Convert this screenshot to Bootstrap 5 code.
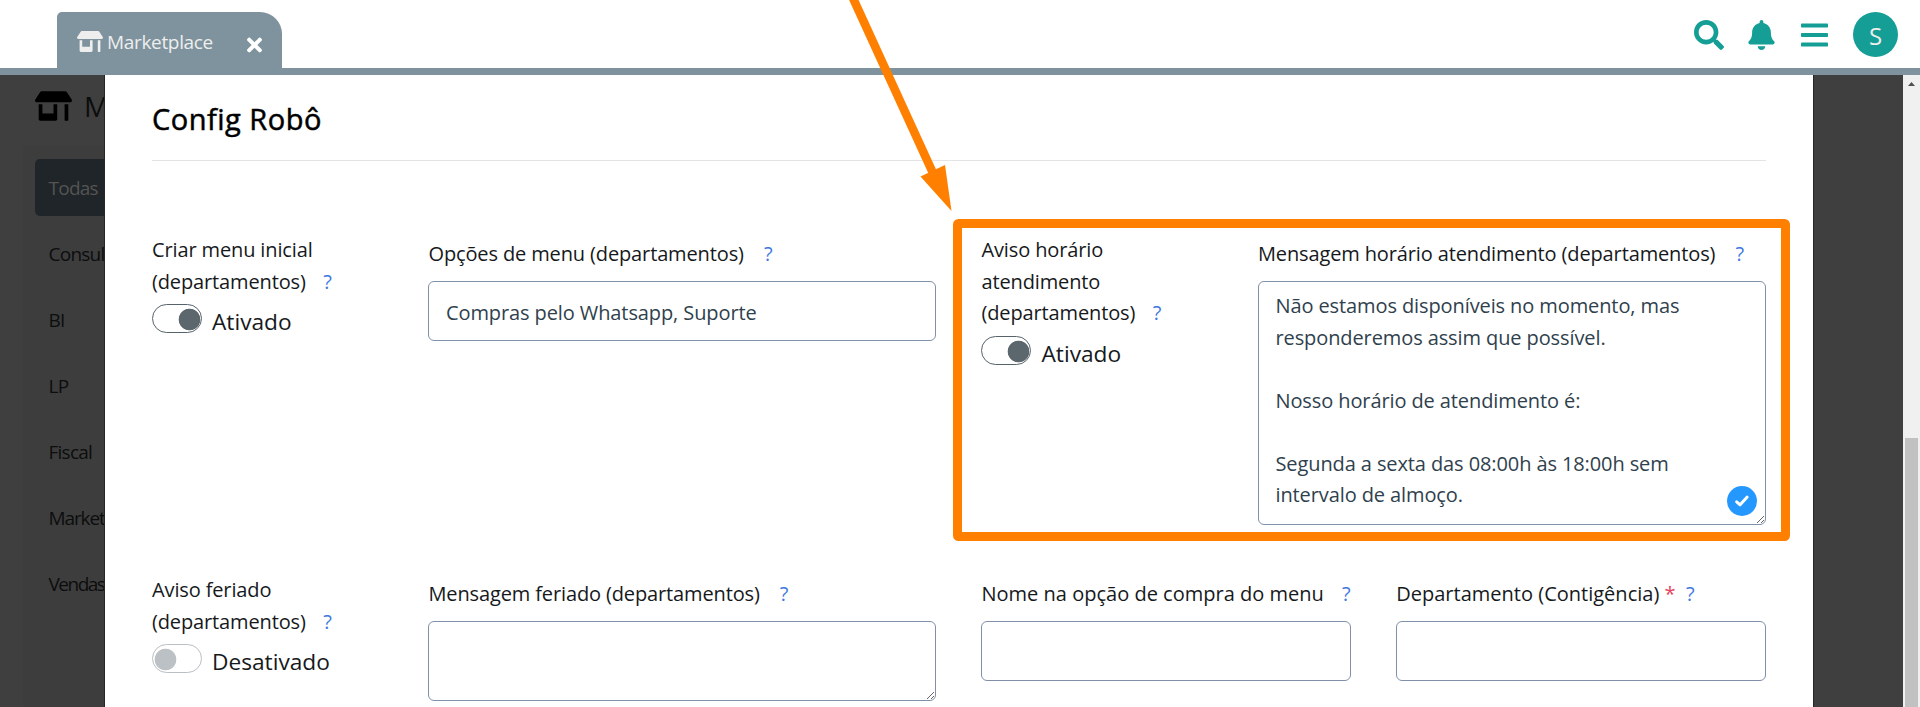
<!DOCTYPE html>
<html lang="pt-BR">
<head>
<meta charset="utf-8">
<meta name="viewport" content="width=device-width, initial-scale=1">
<title>Marketplace</title>
<link href="https://cdn.jsdelivr.net/npm/bootstrap@5.3.0/dist/css/bootstrap.min.css" rel="stylesheet">
<style>
  body { font-family: "Open Sans", "Noto Sans", sans-serif; font-size: 20px; color: #16191c; height: 100vh; }
  .topbar { height: 75px; border-bottom: 7px solid #7e939d; padding: 12px 22px 0 57px; }
  .tab-item { width: 225px; height: 56px; padding: 0 20px; background: #7e939d; color: #eee; border-radius: 5px 22px 0 0; font-size: 19px; letter-spacing: -.33px; }
  .tab-item .tab-icon { margin-top: 19px; }
  .tab-item .tab-label { line-height: 28px; margin: 16px 0 0 4px; }
  .tab-item .tab-close { margin-top: 15.5px; }
  .tools { color: #149e95; }
  .avatar { width: 45px; height: 45px; background: #149e95; color: #eee; font-size: 24px; line-height: 47px; margin-left: 25px; }

  .stage { background: #3f3f3f; }
  .side { width: 105px; flex: none; color: #0c0d0d; white-space: nowrap; }
  .side-title { height: 71px; padding: 16px 0 0 35px; font-size: 28px; line-height: 36px; }
  .side-title span { margin: -3px 0 0 12px; letter-spacing: -8px; }
  .side-menu { background: #3d3d3d; margin-left: 23px; padding: 13px 0 0 12px; font-size: 19px; letter-spacing: -.75px; }
  .side-menu .menu-entry { height: 57px; line-height: 58px; padding-left: 13.5px; margin-bottom: 9px; border-radius: 5px 0 0 5px; }
  .side-menu .menu-entry.long { letter-spacing: -1.1px; }
  .side-menu .menu-entry.longer { letter-spacing: -1.5px; }
  .side-menu .menu-entry.active { background: #1f2528; color: #545454; }

  .dialog-pane { width: 1708px; flex: none; padding: 26px 47px 0; box-shadow: 0 0 0 1px #262626; }
  .dialog-title { font-size: 29px; line-height: 36px; font-weight: 400; letter-spacing: .5px; -webkit-text-stroke: .5px #000; padding-bottom: 23px; margin-bottom: 73px; border-bottom: 1px solid #e2e4e6; color: #000; }
  .fields { --bs-gutter-x: 45px; margin-bottom: 49px; }
  .field-name { line-height: 31.5px; letter-spacing: -.13px; }
  .field-name.lowered { margin: 3.5px 0 12px; white-space: nowrap; }
  .hint { color: #4079e0; margin-left: 15px; }
  .req { color: #e4455b; }
  .col-2 .hint { margin-left: 12.5px; }
  .col-3 .field-name { letter-spacing: .01px; }
  .col-3 .hint { margin-left: 13px; }
  .col-3 .req + .hint { margin-left: 10.5px; }
  .fields .form-control { font-size: 20px; line-height: 31.5px; letter-spacing: -.1px; border: 1px solid #8090a8; border-radius: 6px; padding: 8px 16.5px 7px; color: #2f414d; }
  .fields input.form-control { height: 60px; padding: 9px 16.5px 7px; }
  .fields .tall { height: 244px; white-space: pre; overflow: hidden; }
  .fields .short { height: 80px; overflow: hidden; }
  .toggle-row { margin-top: 7px; height: 34px; font-size: 22.7px; line-height: 35px; }
  .toggle-row .form-check-input { width: 50px; height: 29px; margin: 0 10px 0 0; float: none; flex: none; border: 1px solid #56636b; border-radius: 15px;
    background: #fff radial-gradient(circle at 36.5px 14.5px, #5b666d 10.4px, transparent 11.2px) no-repeat; }
  .toggle-row .form-check-input.off { border-color: #b9bfc3; background-image: radial-gradient(circle at 12.5px 14.5px, #bcc1c5 10.4px, transparent 11.2px); }
  .ok-badge { right: 9px; bottom: 9px; width: 30px; height: 30px; background: #2598ff; }

  .scroll-track { width: 17px; flex: none; background: #f0f0f0; }
  .scroll-gap { height: 346px; }
  .scroll-thumb { width: 13px; background: #c1c1c1; }
  .annotation { inset: 0; pointer-events: none; }
</style>
</head>
<body class="d-flex flex-column overflow-hidden position-relative bg-white">

<header class="topbar bg-white d-flex justify-content-between align-items-start">
  <div class="tab-item d-flex align-items-start">
    <svg class="tab-icon" width="26" height="21" viewBox="0 0 640 512" fill="currentColor"><path d="M320 384H128V224H64v256c0 17.7 14.3 32 32 32h256c17.7 0 32-14.3 32-32V224h-64v160zm314.6-241.8l-85.3-128c-6-8.9-16-14.2-26.7-14.2H117.4c-10.7 0-20.7 5.3-26.6 14.2l-85.3 128c-14.2 21.3 1 49.8 26.6 49.8H608c25.5 0 40.7-28.5 26.6-49.8zM512 496c0 8.8 7.2 16 16 16h32c8.8 0 16-7.2 16-16V224h-64v272z"/></svg>
    <span class="tab-label me-auto">Marketplace</span>
    <svg class="tab-close" width="15" height="34" viewBox="0 80 352 352" fill="#fff"><path d="M242.72 256l100.07-100.07c12.28-12.28 12.28-32.19 0-44.48l-22.24-22.24c-12.28-12.28-32.19-12.28-44.48 0L176 189.28 75.93 89.21c-12.28-12.28-32.19-12.28-44.48 0L9.21 111.45c-12.28 12.28-12.28 32.19 0 44.48L109.28 256 9.21 356.07c-12.28 12.28-12.28 32.19 0 44.48l22.24 22.24c12.28 12.28 32.2 12.28 44.48 0L176 322.72l100.07 100.07c12.28 12.28 32.2 12.28 44.48 0l22.24-22.24c12.28-12.28 12.28-32.19 0-44.48L242.72 256z"/></svg>
  </div>
  <div class="tools d-flex align-items-center">
    <svg width="30" height="30" viewBox="0 0 512 512" fill="currentColor"><path d="M505 442.7L405.3 343c-4.5-4.5-10.6-7-17-7H372c27.6-35.3 44-79.7 44-128C416 93.1 322.9 0 208 0S0 93.1 0 208s93.1 208 208 208c48.3 0 92.7-16.4 128-44v16.3c0 6.4 2.5 12.5 7 17l99.7 99.7c9.4 9.4 24.6 9.4 33.9 0l28.3-28.3c9.4-9.4 9.4-24.6.1-34zM208 336c-70.7 0-128-57.2-128-128 0-70.7 57.2-128 128-128 70.7 0 128 57.2 128 128 0 70.7-57.2 128-128 128z"/></svg>
    <svg class="ms-4" width="27" height="30" viewBox="0 0 448 512" fill="currentColor"><path d="M224 512c35.32 0 63.97-28.65 63.97-64H160.03c0 35.35 28.65 64 63.97 64zm215.39-149.71c-19.32-20.76-55.47-51.99-55.47-154.29 0-77.7-54.48-139.9-127.94-155.16V32c0-17.67-14.32-32-31.98-32s-31.98 14.33-31.98 32v20.84C118.56 68.1 64.08 130.3 64.08 208c0 102.3-36.15 133.53-55.47 154.29-6 6.45-8.66 14.16-8.61 21.71.11 16.4 12.98 32 32.1 32h383.8c19.12 0 32-15.6 32.1-32 .05-7.55-2.61-15.27-8.61-21.71z"/></svg>
    <svg class="ms-4" width="29" height="30" viewBox="-2 0 29 30" fill="currentColor"><rect y="3.5" width="27" height="4" rx=".8"/><rect y="13" width="27" height="4" rx=".8"/><rect y="22.5" width="27" height="4" rx=".8"/></svg>
    <div class="avatar rounded-circle text-center">S</div>
  </div>
</header>

<div class="stage d-flex flex-grow-1 overflow-hidden">
  <aside class="side overflow-hidden">
    <div class="side-title d-flex align-items-start">
      <svg class="flex-shrink-0" width="37" height="30" viewBox="0 0 640 512" fill="#000"><path d="M320 384H128V224H64v256c0 17.7 14.3 32 32 32h256c17.7 0 32-14.3 32-32V224h-64v160zm314.6-241.8l-85.3-128c-6-8.9-16-14.2-26.7-14.2H117.4c-10.7 0-20.7 5.3-26.6 14.2l-85.3 128c-14.2 21.3 1 49.8 26.6 49.8H608c25.5 0 40.7-28.5 26.6-49.8zM512 496c0 8.8 7.2 16 16 16h32c8.8 0 16-7.2 16-16V224h-64v272z"/></svg>
      <span>M</span>
    </div>
    <nav class="side-menu h-100">
      <div class="menu-entry active">Todas</div>
      <div class="menu-entry">Consul</div>
      <div class="menu-entry">BI</div>
      <div class="menu-entry">LP</div>
      <div class="menu-entry">Fiscal</div>
      <div class="menu-entry long">Market</div>
      <div class="menu-entry longer">Vendas</div>
    </nav>
  </aside>

  <main class="dialog-pane bg-white overflow-hidden">
    <h2 class="dialog-title">Config Robô</h2>

    <div class="row fields">
      <div class="col-2">
        <div class="field-name">Criar menu inicial (departamentos) <span class="hint">?</span></div>
        <div class="toggle-row d-flex"><span class="form-check-input"></span><span class="form-check-label">Ativado</span></div>
      </div>
      <div class="col-4">
        <div class="field-name lowered">Opções de menu (departamentos) <span class="hint">?</span></div>
        <input class="form-control" value="Compras pelo Whatsapp, Suporte">
      </div>
      <div class="col-2">
        <div class="field-name">Aviso horário<br>atendimento<br>(departamentos) <span class="hint">?</span></div>
        <div class="toggle-row d-flex"><span class="form-check-input"></span><span class="form-check-label">Ativado</span></div>
      </div>
      <div class="col-4">
        <div class="field-name lowered">Mensagem horário atendimento (departamentos) <span class="hint">?</span></div>
        <div class="position-relative">
          <textarea class="form-control tall d-block" spellcheck="false">Não estamos disponíveis no momento, mas
responderemos assim que possível.

Nosso horário de atendimento é:

Segunda a sexta das 08:00h às 18:00h sem
intervalo de almoço.</textarea>
          <span class="ok-badge position-absolute rounded-circle d-flex align-items-center justify-content-center">
            <svg width="14" height="12" viewBox="0 0 14 12" fill="none" stroke="#fff" stroke-width="3"><path d="M1.7 6.8l3.4 3L12 2.2" stroke-linejoin="round" stroke-linecap="round"/></svg>
          </span>
        </div>
      </div>
    </div>

    <div class="row fields">
      <div class="col-2">
        <div class="field-name">Aviso feriado<br>(departamentos) <span class="hint">?</span></div>
        <div class="toggle-row d-flex"><span class="form-check-input off"></span><span class="form-check-label">Desativado</span></div>
      </div>
      <div class="col-4">
        <div class="field-name lowered">Mensagem feriado (departamentos) <span class="hint">?</span></div>
        <textarea class="form-control short d-block" spellcheck="false"></textarea>
      </div>
      <div class="col-3">
        <div class="field-name lowered">Nome na opção de compra do menu <span class="hint">?</span></div>
        <input class="form-control">
      </div>
      <div class="col-3">
        <div class="field-name lowered">Departamento (Contigência) <span class="req">*</span><span class="hint">?</span></div>
        <input class="form-control">
      </div>
    </div>
  </main>

  <div class="scroll-track ms-auto d-flex flex-column align-items-center">
    <svg class="flex-shrink-0" width="17" height="17" viewBox="0 0 17 17"><path d="M5 11l3.5-4 3.5 4z" fill="#505050"/></svg>
    <div class="scroll-gap flex-shrink-0"></div>
    <div class="scroll-thumb flex-grow-1"></div>
  </div>
</div>

<svg class="annotation position-absolute" width="1920" height="707" viewBox="0 0 1920 707">
  <path d="M852 -4L932.5 172" stroke="#ff8000" stroke-width="8.6"/>
  <path d="M920.5 176.5L945 165L951.5 211z" fill="#ff8000"/>
  <rect x="957.5" y="223.5" width="828" height="313" rx="1" fill="none" stroke="#ff8000" stroke-width="9" stroke-linejoin="round"/>
</svg>

<script src="https://cdn.jsdelivr.net/npm/bootstrap@5.3.0/dist/js/bootstrap.bundle.min.js"></script>
</body>
</html>
